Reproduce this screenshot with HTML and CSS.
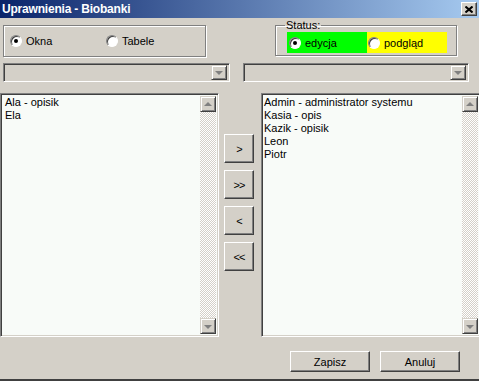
FILE: index.html
```html
<!DOCTYPE html>
<html lang="pl">
<head>
  <meta charset="UTF-8" />
  <title>Uprawnienia - Biobanki</title>
  <link rel="stylesheet" href="styles.css">
</head>
<body>
  <div class="window">
    <div class="titlebar">
      <span class="title">Uprawnienia - Biobanki</span>
      <span class="close">
        <svg width="8" height="7" viewBox="0 0 8 7"><path d="M0.5 0.5 L7.5 6.5 M7.5 0.5 L0.5 6.5" stroke="#000" stroke-width="2"/></svg>
      </span>
    </div>

    <div class="top">
      <div class="group">
        <label class="opt opt-okna"><span class="radio checked"></span>Okna</label>
        <label class="opt"><span class="radio"></span>Tabele</label>
      </div>
      <fieldset class="status">
        <legend>Status:</legend>
        <div class="status-row">
          <label class="opt green"><span class="radio checked"></span>edycja</label>
          <label class="opt yellow"><span class="radio"></span>podgląd</label>
        </div>
      </fieldset>
    </div>

    <div class="combos">
      <div class="combo combo-left"><span class="drop"><i class="arrow down"></i></span></div>
      <div class="combo combo-right"><span class="drop"><i class="arrow down"></i></span></div>
    </div>

    <div class="lists">
      <div class="list list-left">
        <ul>
          <li>Ala - opisik</li>
          <li>Ela</li>
        </ul>
        <div class="scroll">
          <span class="sbtn"><i class="arrow up"></i></span>
          <span class="sbtn"><i class="arrow down"></i></span>
        </div>
      </div>

      <div class="movers">
        <button class="btn move">&gt;</button>
        <button class="btn move">&gt;&gt;</button>
        <button class="btn move">&lt;</button>
        <button class="btn move">&lt;&lt;</button>
      </div>

      <div class="list list-right">
        <ul>
          <li>Admin - administrator systemu</li>
          <li>Kasia - opis</li>
          <li>Kazik - opisik</li>
          <li>Leon</li>
          <li>Piotr</li>
        </ul>
        <div class="scroll">
          <span class="sbtn"><i class="arrow up"></i></span>
          <span class="sbtn"><i class="arrow down"></i></span>
        </div>
      </div>
    </div>

    <div class="actions">
      <button class="btn action">Zapisz</button>
      <button class="btn action">Anuluj</button>
    </div>
  </div>
</body>
</html>
```

FILE: styles.css
```css
body {
  margin: 0;
  font-family: "Liberation Sans", Arial, sans-serif;
  font-size: 11px;
  color: #000;
  background: #d4d0c8;
}
.window {
  width: 479px;
  height: 381px;
  box-sizing: border-box;
  background: #d4d0c8;
  border-bottom: 2px solid #404040;
  display: flex;
  flex-direction: column;
  overflow: hidden;
}
.titlebar {
  height: 18px;
  flex: none;
  display: flex;
  align-items: center;
  justify-content: space-between;
  padding: 0 2px 0 2px;
  background: linear-gradient(to right, #0a246a, #a6caf0);
}
.title {
  color: #fff;
  font-weight: bold;
  font-size: 12px;
  letter-spacing: -0.2px;
}
.close {
  width: 16px;
  height: 14px;
  box-sizing: border-box;
  background: #d4d0c8;
  border: 1px solid;
  border-color: #fff #404040 #404040 #fff;
  box-shadow: inset -1px -1px #808080;
  display: flex;
  align-items: center;
  justify-content: center;
}

/* top row */
.top {
  display: flex;
  align-items: flex-start;
  padding: 1px 0 0 3px;
  height: 40px;
  flex: none;
}
.group {
  width: 203px;
  height: 32px;
  margin-top: 6px;
  box-sizing: border-box;
  border: 1px solid #808080;
  box-shadow: inset 1px 1px #fff, 1px 1px #fff;
  display: flex;
  align-items: center;
  padding-left: 6px;
}
.opt {
  display: flex;
  align-items: center;
  gap: 4px;
}
.opt-okna {
  width: 96px;
}
.radio {
  width: 10px;
  height: 10px;
  border-radius: 50%;
  background: #fff;
  border: 1px solid;
  border-color: #808080 #fff #fff #808080;
  box-shadow: inset 1px 1px #404040;
  position: relative;
  flex: none;
}
.radio.checked::after {
  content: "";
  position: absolute;
  left: 3px;
  top: 3px;
  width: 4px;
  height: 4px;
  border-radius: 50%;
  background: #000;
}
.status {
  margin: 0 0 0 69px;
  padding: 0 0 2px 11px;
  width: 182px;
  box-sizing: border-box;
  border: 1px solid #808080;
  box-shadow: inset 1px 1px #fff, 1px 1px #fff;
}
.status legend {
  padding: 0 1px;
  margin-left: -2px;
  line-height: 13px;
}
.status-row {
  display: flex;
  height: 21px;
}
.green,
.yellow {
  width: 80px;
  padding-left: 2px;
  box-sizing: border-box;
}
.green {
  background: #00ff00;
}
.yellow {
  background: #ffff00;
  padding-left: 1px;
}

/* combos */
.combos {
  display: flex;
  padding: 4px 0 0 3px;
  gap: 13px;
  flex: none;
}
.combo {
  height: 19px;
  box-sizing: border-box;
  border: 1px solid;
  border-color: #808080 #fff #fff #808080;
  box-shadow: inset 1px 1px #404040, inset -1px -1px #d4d0c8;
  display: flex;
  justify-content: flex-end;
  align-items: center;
  padding-right: 2px;
}
.combo-left {
  width: 227px;
}
.combo-right {
  width: 226px;
}
.drop,
.sbtn {
  width: 16px;
  height: 15px;
  box-sizing: border-box;
  background: #d4d0c8;
  border: 1px solid;
  border-color: #d4d0c8 #404040 #404040 #d4d0c8;
  box-shadow: inset 1px 1px #fff, inset -1px -1px #808080;
  display: flex;
  align-items: center;
  justify-content: center;
}
.arrow {
  width: 0;
  height: 0;
  border-left: 4px solid transparent;
  border-right: 4px solid transparent;
}
.arrow.down {
  border-top: 4px solid #808080;
  margin-top: 1px;
}
.arrow.up {
  border-bottom: 4px solid #808080;
  margin-bottom: 1px;
}

/* lists */
.lists {
  display: flex;
  padding-top: 11px;
  flex: none;
}
.list {
  height: 244px;
  box-sizing: border-box;
  border: 1px solid;
  border-color: #808080 #fff #fff #808080;
  box-shadow: inset 1px 1px #404040, inset -1px -1px #d4d0c8;
  background: #f8fbf8;
  padding: 2px;
  display: flex;
  flex: none;
}
.list-left {
  width: 219px;
}
.list-right {
  width: 220px;
}
.list ul {
  list-style: none;
  margin: 0;
  padding: 0 0 0 2px;
  flex: 1;
  line-height: 13px;
}
.list-right ul {
  padding-left: 0;
}
.scroll {
  width: 16px;
  display: flex;
  flex-direction: column;
  justify-content: space-between;
  background-color: #fff;
  background-image: conic-gradient(#d4d0c8 25%, #fff 0 50%, #d4d0c8 0 75%, #fff 0);
  background-size: 2px 2px;
}
.scroll .sbtn {
  height: 16px;
}
.movers {
  width: 42px;
  flex: none;
  display: flex;
  flex-direction: column;
  align-items: flex-start;
  padding: 41px 0 0 5px;
  box-sizing: border-box;
  gap: 7px;
}
.btn {
  font-family: "Liberation Sans", Arial, sans-serif;
  font-size: 11px;
  color: #000;
  background: #d4d0c8;
  border: 1px solid;
  border-color: #fff #404040 #404040 #fff;
  box-shadow: inset -1px -1px #808080, inset 1px 1px #d4d0c8;
  padding: 0;
}
.move {
  width: 30px;
  height: 29px;
  letter-spacing: -1px;
}

/* bottom buttons */
.actions {
  display: flex;
  justify-content: flex-end;
  gap: 10px;
  padding: 14px 19px 0 0;
}
.action {
  width: 80px;
  height: 21px;
}
```
